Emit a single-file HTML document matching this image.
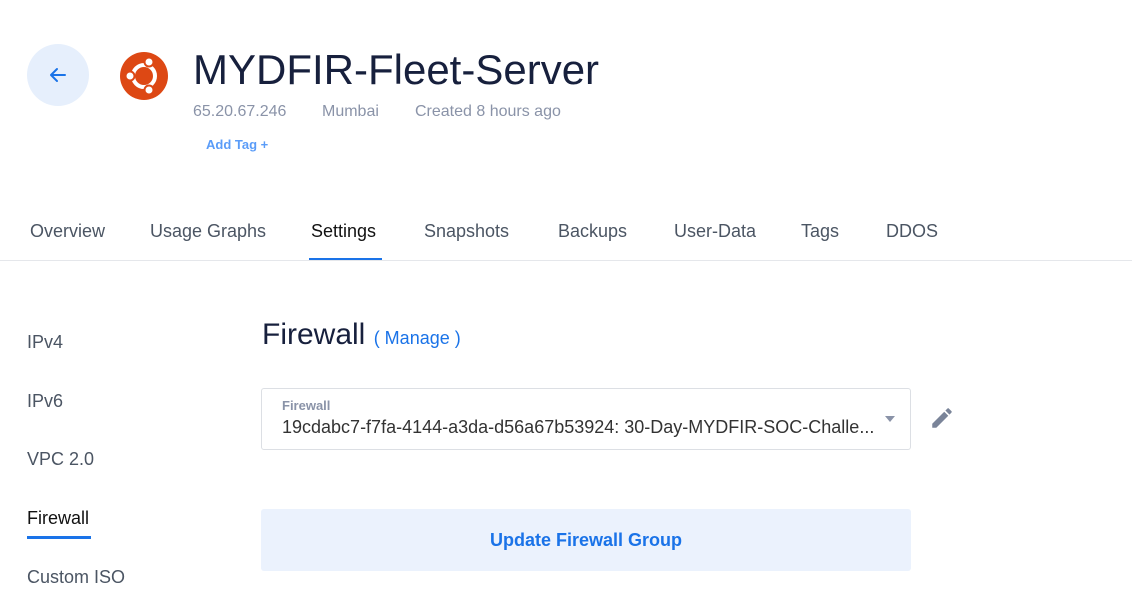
<!DOCTYPE html>
<html><head><style>
body{margin:0;width:1132px;height:613px;background:#fff;font-family:"Liberation Sans",sans-serif;position:relative;overflow:hidden}
.a{position:absolute;white-space:nowrap}
.tab{position:absolute;top:221px;font-size:18px;color:#4b5563}
.side{position:absolute;left:27px;font-size:18px;color:#4b5563}
</style></head><body>
<div class="a" style="left:27px;top:44px;width:62px;height:62px;border-radius:50%;background:#e6effc"></div>
<svg class="a" style="left:46px;top:63px" width="24" height="24" viewBox="0 0 24 24"><path d="M19 12H5M11 6l-6 6 6 6" stroke="#1a73e8" stroke-width="2" fill="none" stroke-linecap="round" stroke-linejoin="round"/></svg>
<svg class="a" style="left:119px;top:51px" width="50" height="50" viewBox="0 0 50 50"><circle cx="25" cy="25" r="24" fill="#dd4814"/><circle cx="25" cy="25" r="11" stroke="#fff" stroke-width="4" fill="none"/><circle cx="30" cy="11" r="4.5" fill="#fff" stroke="#dd4814" stroke-width="2"/><circle cx="30" cy="39" r="4.5" fill="#fff" stroke="#dd4814" stroke-width="2"/><circle cx="11" cy="25" r="4.5" fill="#fff" stroke="#dd4814" stroke-width="2"/></svg>
<div class="a" style="left:193px;top:46px;font-size:42px;color:#17203d">MYDFIR-Fleet-Server</div>
<div class="a" style="left:193px;top:103px;font-size:16px;color:#8a93a8">65.20.67.246</div>
<div class="a" style="left:322px;top:103px;font-size:16px;color:#8a93a8">Mumbai</div>
<div class="a" style="left:415px;top:103px;font-size:16px;color:#8a93a8">Created 8 hours ago</div>
<div class="a" style="left:206px;top:137px;font-size:13px;font-weight:bold;color:#5a9cf8">Add Tag +</div>
<div class="tab" style="left:30px">Overview</div>
<div class="tab" style="left:150px">Usage Graphs</div>
<div class="tab" style="left:311px;color:#111">Settings</div>
<div class="a" style="left:309px;top:258px;width:73px;height:2px;background:#1a73e8"></div>
<div class="tab" style="left:424px">Snapshots</div>
<div class="tab" style="left:558px">Backups</div>
<div class="tab" style="left:674px">User-Data</div>
<div class="tab" style="left:801px">Tags</div>
<div class="tab" style="left:886px">DDOS</div>
<div class="a" style="left:0;top:260px;width:1132px;height:1px;background:#e5e7eb"></div>
<div class="side" style="top:332px">IPv4</div>
<div class="side" style="top:391px">IPv6</div>
<div class="side" style="top:449px">VPC 2.0</div>
<div class="side" style="top:508px;color:#111">Firewall</div>
<div class="a" style="left:27px;top:536px;width:64px;height:3px;background:#1a73e8"></div>
<div class="side" style="top:567px">Custom ISO</div>
<div class="a" style="left:262px;top:318px;font-size:30px;color:#17203d">Firewall <span style="font-size:18px;color:#1a73e8">( Manage )</span></div>
<div class="a" style="left:261px;top:388px;width:648px;height:60px;border:1px solid #dcdfe4;border-radius:3px"></div>
<div class="a" style="left:282px;top:398px;font-size:13px;font-weight:bold;color:#8a93a8">Firewall</div>
<div class="a" style="left:282px;top:417px;font-size:18px;color:#333">19cdabc7-f7fa-4144-a3da-d56a67b53924: 30-Day-MYDFIR-SOC-Challe...</div>
<div class="a" style="left:885px;top:416px;width:0;height:0;border-left:5px solid transparent;border-right:5px solid transparent;border-top:6px solid #8a93a8"></div>
<svg class="a" style="left:929px;top:405px" width="26" height="26" viewBox="0 0 24 24"><path d="M3 17.25V21h3.75L17.81 9.94l-3.75-3.75L3 17.25zM20.71 7.04a1 1 0 000-1.41l-2.34-2.34a1 1 0 00-1.41 0l-1.830 1.83 3.75 3.75 1.83-1.83z" fill="#7a8499"/></svg>
<div class="a" style="left:261px;top:509px;width:650px;height:62px;background:#ebf2fd;border-radius:3px;text-align:center;line-height:62px;font-size:18px;font-weight:bold;color:#1a73e8">Update Firewall Group</div>
</body></html>
